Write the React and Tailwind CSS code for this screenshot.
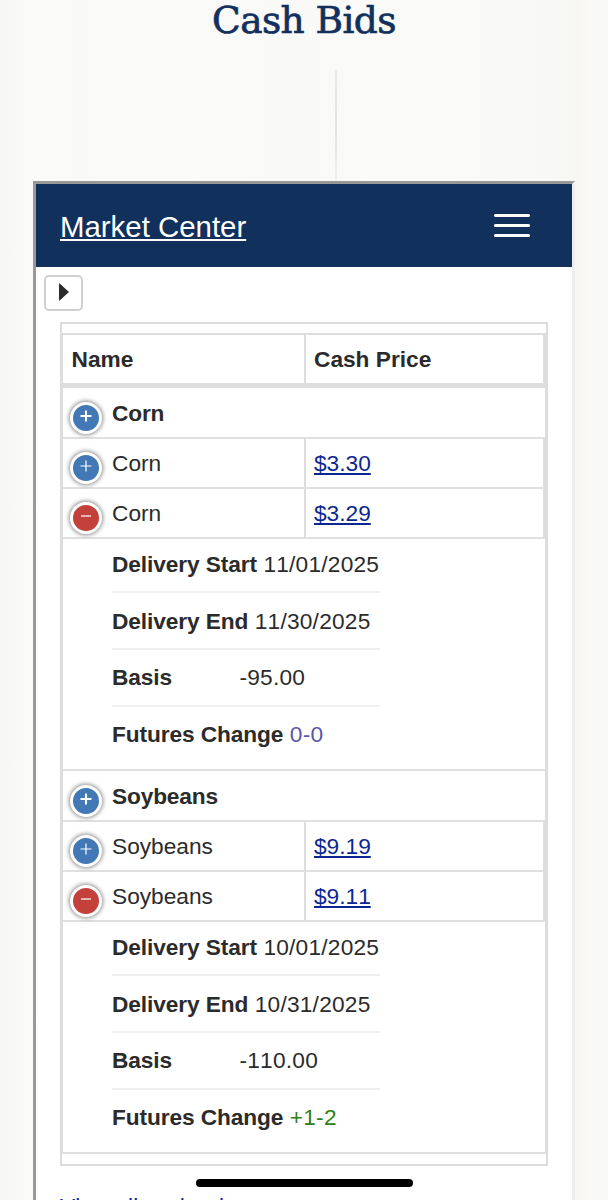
import { useState } from 'react';

const groups = [
    {
        name: 'Corn',
        bids: [
            { price: '$3.30' },
            {
                price: '$3.29',
                start: '11/01/2025',
                end: '11/30/2025',
                basis: '-95.00',
                change: '0-0',
                changeClass: 'text-[#5a56a8]',
            },
        ],
    },
    {
        name: 'Soybeans',
        bids: [
            { price: '$9.19' },
            {
                price: '$9.11',
                start: '10/01/2025',
                end: '10/31/2025',
                basis: '-110.00',
                change: '+1-2',
                changeClass: 'text-[#2f8018]',
            },
        ],
    },
];

function Toggle({ open, bold, onClick }) {
    return (
        <button
            onClick={onClick}
            className={`mt-[13px] flex h-8 w-8 shrink-0 items-center justify-center rounded-full border-3 border-white shadow-[0_0_4px_1px_#8c8c8c] ${open ? 'bg-[#c4403b]' : 'bg-[#4278b6]'}`}
        >
            <svg width="14" height="14" viewBox="0 0 14 14" stroke="white" strokeWidth={bold ? 2.1 : 1.2} className="-mt-[3px]">
                <path d={open ? 'M2 7H12' : 'M1.5 7H12.5M7 1.5V12.5'} />
            </svg>
        </button>
    );
}

function Detail({ label, children }) {
    return (
        <li className="flex h-[56.8px] gap-[6.5px] border-b-2 border-[#efefef] pt-[13.5px] tracking-[0.22px] first:h-[43px] first:pt-0 last:border-0">
            <span className="min-w-[121px] font-bold tracking-[-0.1px]">{label}</span>
            {children}
        </li>
    );
}

function Bid({ name, bid }) {
    const [open, setOpen] = useState(Boolean(bid.start));

    return (
        <>
            <div className="flex h-[50.2px] border-b-2 border-[#e0e0e0]">
                <div className="flex w-[243px] gap-[10px] border-r-2 border-[#ddd] pl-[7px]">
                    <Toggle open={open} onClick={() => setOpen(!open)} />
                    <span className="pt-[10.5px]">{name}</span>
                </div>
                <div className="flex-1 border-r-2 border-[#ddd] pt-[10.5px] pl-2">
                    <a href="#" className="text-[#0c2693] underline decoration-[1.5px] underline-offset-2">{bid.price}</a>
                </div>
            </div>
            {open && bid.start && (
                <div className="h-[232px] border-b-2 border-[#e0e0e0] pt-[11px] pl-[49px]">
                    <ul className="w-[268px] whitespace-nowrap">
                        <Detail label="Delivery Start">{bid.start}</Detail>
                        <Detail label="Delivery End">{bid.end}</Detail>
                        <Detail label="Basis">{bid.basis}</Detail>
                        <Detail label="Futures Change">
                            <span className={bid.changeClass}>{bid.change}</span>
                        </Detail>
                    </ul>
                </div>
            )}
        </>
    );
}

function App() {
    return (
        <div className="h-[1200px] w-[608px] overflow-hidden bg-[#f9f9f7] bg-[linear-gradient(90deg,#f7f7f5_0px,#fafaf8_30px,#f9f9f7_85px,#fafaf9_110px,#f9f9f7_300px,#fafaf8_420px,#f8f8f6_560px,#f7f6f3_578px,#faf9f8_590px,#f9f9f7_608px)] font-['Liberation_Sans',Arial,sans-serif] text-[22.7px] leading-[28px] text-[#2b2b2b] [font-kerning:none]">
            <h1 className="h-[70px] text-center font-['DejaVu_Serif',serif] text-[37.5px] leading-[40px] tracking-[-0.6px] text-[#12305c] [-webkit-text-stroke:0.7px_#12305c]">
                Cash Bids
            </h1>
            {/* seam between the background boards */}
            <div className="ml-[335px] h-[111px] w-[2px] bg-linear-to-b from-[#ebebe9] via-[#e3e3e1] to-[#efefed]" />

            <main className="ml-[33px] h-[1040px] w-[542px] border-3 border-t-[#999] border-r-[#eee] border-b-[#eee] border-l-[#999] bg-white">
                <nav className="flex h-[83px] items-center justify-between bg-[#12305c] pr-[42px] pl-6">
                    <a href="#" className="pt-[2px] text-[29.4px] text-white underline decoration-2 underline-offset-2">Market Center</a>
                    <button className="mb-[1px] flex w-9 flex-col gap-[7px]">
                        <span className="h-[3px] rounded-sm bg-white" />
                        <span className="h-[3px] rounded-sm bg-white" />
                        <span className="h-[3px] rounded-sm bg-white" />
                    </button>
                </nav>

                <button className="mt-2 ml-2 flex h-9 w-[39px] items-center justify-center rounded-[5px] border-2 border-[#d0d0d0]">
                    <svg width="10" height="20" viewBox="0 0 10 20" fill="#2b2b2b">
                        <path d="M0 0L10 9L0 18Z" />
                    </svg>
                </button>

                <section className="mt-[11px] ml-6 h-[844px] w-[488px] border-2 border-[#ddd] pt-[9px]">
                    <div className="-mr-[2px] border-t-2 border-r-3 border-l border-[#ddd]">
                        <div className="flex h-[53px] border-b-5 border-[#ddd] font-bold">
                            <div className="w-[243px] border-r-2 border-[#ddd] pt-[10px] pl-[8.5px]">Name</div>
                            <div className="flex-1 border-r-2 border-[#ddd] pt-[10px] pl-2">Cash Price</div>
                        </div>
                        {groups.map((group) => (
                            <div key={group.name}>
                                <div className="flex h-[50.2px] gap-[10px] border-b-2 border-[#e0e0e0] pl-[7px] nth-[1]:mt-[0.5px]">
                                    <Toggle bold />
                                    <span className="pt-[10px] font-bold tracking-[-0.15px]">{group.name}</span>
                                </div>
                                {group.bids.map((bid) => (
                                    <Bid key={bid.price} name={group.name} bid={bid} />
                                ))}
                            </div>
                        ))}
                    </div>
                </section>

                <a href="#" className="mt-[26px] ml-6 block text-[#0c2693]">View all cash prices</a>
            </main>

            {/* home indicator */}
            <div className="fixed top-[1179px] left-[196px] h-2 w-[217px] rounded-full bg-black" />
        </div>
    );
}

export default App;
